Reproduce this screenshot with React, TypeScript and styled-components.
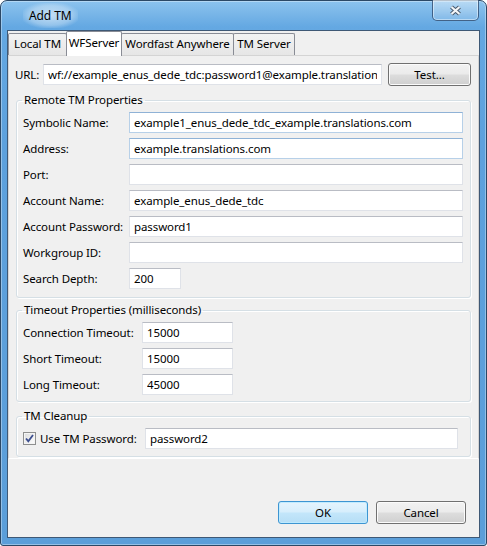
import styled, { createGlobalStyle } from "styled-components";

const GlobalStyle = createGlobalStyle`
  html, body {
    margin: 0;
    padding: 0;
  }
  body {
    background: #ffffff;
    font-family: "Noto Sans", "Liberation Sans", sans-serif;
    font-size: 11.5px;
    letter-spacing: -0.1px;
    color: #000;
  }
  * {
    box-sizing: border-box;
  }
`;

const remoteRows = [
  { label: "Symbolic Name:", value: "example1_enus_dede_tdc_example.translations.com", hot: true },
  { label: "Address:", value: "example.translations.com", hot: true },
  { label: "Port:", value: "" },
  { label: "Account Name:", value: "example_enus_dede_tdc" },
  { label: "Account Password:", value: "password1" },
  { label: "Workgroup ID:", value: "" },
  { label: "Search Depth:", value: "200", width: 52 },
];

const timeoutRows = [
  { label: "Connection Timeout:", value: "15000" },
  { label: "Short Timeout:", value: "15000" },
  { label: "Long Timeout:", value: "45000" },
];

const tabs = [
  { name: "Local TM", width: 59 },
  { name: "WFServer", width: 56, active: true },
  { name: "Wordfast Anywhere", width: 113 },
  { name: "TM Server", width: 62 },
];

const App = () => {
  return (
    <>
      <GlobalStyle />
      <Window>
        <TitleBar>
          <Title>Add TM</Title>
          <CloseButton>
            <svg width="13" height="11" viewBox="0 0 13 11">
              <path d="M2.5 2 L10.5 9 M10.5 2 L2.5 9" stroke="#4a5a6e" strokeWidth="4.2" />
              <path d="M2.5 2 L10.5 9 M10.5 2 L2.5 9" stroke="#f4f6f8" strokeWidth="2.2" />
            </svg>
          </CloseButton>
        </TitleBar>
        <Client>
          <TabStrip>
            {tabs.map((t) => (
              <Tab key={t.name} $w={t.width} $active={t.active}>
                {t.name}
              </Tab>
            ))}
          </TabStrip>
          <Page>
            <UrlRow>
              <UrlLabel>URL:</UrlLabel>
              <Field readOnly value="wf://example_enus_dede_tdc:password1@example.translations.com" />
              <Button $w={83}>Test...</Button>
            </UrlRow>

            <Group $top={6} $bottom={8}>
              <Caption>Remote TM Properties</Caption>
              <Rows>
                {remoteRows.map((r) => (
                  <FormRow key={r.label}>
                    <Label $w={106}>{r.label}</Label>
                    <Field readOnly value={r.value} $w={r.width} $hot={r.hot} />
                  </FormRow>
                ))}
              </Rows>
            </Group>

            <Group $top={4} $bottom={6}>
              <Caption>Timeout Properties (milliseconds)</Caption>
              <Rows>
                {timeoutRows.map((r) => (
                  <FormRow key={r.label}>
                    <Label $w={119}>{r.label}</Label>
                    <Field readOnly value={r.value} $w={91} />
                  </FormRow>
                ))}
              </Rows>
            </Group>

            <Group $top={6} $bottom={7}>
              <Caption>TM Cleanup</Caption>
              <FormRow>
                <CheckLabel>
                  <CheckBox>
                    <svg width="11" height="11" viewBox="0 0 11 11">
                      <path d="M2 5.5 L4.3 8.2 L9 2" fill="none" stroke="#3d4f8f" strokeWidth="1.8" />
                    </svg>
                  </CheckBox>
                  Use TM Password:
                </CheckLabel>
                <Field readOnly value="password2" $w={313} />
              </FormRow>
            </Group>
          </Page>
          <Footer>
            <Button $w={90} $default>
              OK
            </Button>
            <Button $w={90}>Cancel</Button>
          </Footer>
        </Client>
      </Window>
    </>
  );
};

export default App;

const Window = styled.div`
  width: 487px;
  height: 546px;
  border: 1px solid #2b4866;
  border-radius: 7px 7px 3px 3px;
  background: linear-gradient(180deg, #8cc3ee 0px, #64a8e2 26px, #5da1dd 140px, #5b9ed9 100%);
  box-shadow: inset 0 0 0 1px rgba(255, 255, 255, 0.35);
  display: flex;
  flex-direction: column;
  padding: 0 6px 7px;
`;

const TitleBar = styled.div`
  height: 29px;
  display: flex;
  align-items: flex-start;
`;

const Title = styled.div`
  margin: 2px 0 0 16px;
  padding: 0 6px;
  line-height: 25px;
  font-size: 12px;
  color: #000;
  background: radial-gradient(
    ellipse at center,
    rgba(255, 255, 255, 0.55) 0%,
    rgba(255, 255, 255, 0.3) 55%,
    rgba(255, 255, 255, 0) 78%
  );
`;

const CloseButton = styled.div`
  margin: -1px 1px 0 auto;
  width: 47px;
  height: 21px;
  border: 1px solid rgba(32, 62, 100, 0.75);
  border-top: none;
  border-radius: 0 0 5px 5px;
  background: linear-gradient(180deg, rgba(255, 255, 255, 0.4), rgba(255, 255, 255, 0.12));
  box-shadow: inset 0 0 0 1px rgba(255, 255, 255, 0.45);
  display: flex;
  align-items: center;
  justify-content: center;
  padding-top: 1px;
`;

const Client = styled.div`
  flex: 1;
  border: 1px solid #3e5875;
  background: #f0f0f0;
  display: flex;
  flex-direction: column;
`;

const TabStrip = styled.div`
  height: 24px;
  display: flex;
  align-items: flex-end;
  position: relative;
  z-index: 1;
`;

const Tab = styled.div<{ $w: number; $active?: boolean }>`
  width: ${(p) => p.$w}px;
  height: ${(p) => (p.$active ? 25 : 22)}px;
  margin-bottom: ${(p) => (p.$active ? -1 : 0)}px;
  margin-left: -1px;
  border: 1px solid #898c95;
  border-bottom: none;
  border-radius: 2px 2px 0 0;
  background: ${(p) => (p.$active ? "#ffffff" : "linear-gradient(180deg, #f3f3f3, #e6e6e6)")};
  position: relative;
  z-index: ${(p) => (p.$active ? 2 : 1)};
  text-align: center;
  line-height: ${(p) => (p.$active ? 22 : 20)}px;
  white-space: nowrap;

  &:first-child {
    margin-left: 0;
  }
`;

const Page = styled.div`
  border: 1px solid #d4d4d4;
  border-bottom-color: #ffffff;
  background: #f0f0f0;
  padding: 7px 7px 1px;
  display: flex;
  flex-direction: column;
`;

const UrlRow = styled.div`
  height: 23px;
  display: flex;
  align-items: center;
`;

const UrlLabel = styled.div`
  width: 28px;
  margin-left: -1px;
  flex-shrink: 0;
`;

const Field = styled.input<{ $w?: number; $hot?: boolean }>`
  ${(p) => (p.$w ? `width: ${p.$w}px; flex: none;` : "flex: 1; min-width: 0;")}
  height: 21px;
  margin: 0;
  padding: 0 4px;
  border: 1px solid ${(p) => (p.$hot ? "#b7d0e8" : "#dfe2e8")};
  border-top-color: ${(p) => (p.$hot ? "#8fb2d6" : "#b9bcc4")};
  background: #ffffff;
  font: inherit;
  letter-spacing: inherit;
  color: #000;
  outline: none;

  & + button {
    margin-left: 6px;
  }
`;

const Button = styled.button<{ $w: number; $default?: boolean }>`
  width: ${(p) => p.$w}px;
  height: 23px;
  flex: none;
  padding: 0;
  border: 1px solid ${(p) => (p.$default ? "#3d95d2" : "#707070")};
  border-radius: 3px;
  font: inherit;
  letter-spacing: inherit;
  color: #000;
  background: ${(p) =>
    p.$default
      ? "linear-gradient(180deg, #e5f4fd 0%, #d6eefc 48%, #c3e6fa 52%, #b6def6 100%)"
      : "linear-gradient(180deg, #f2f2f2 0%, #ebebeb 48%, #dddddd 52%, #cfcfcf 100%)"};
  box-shadow: inset 0 0 0 1px ${(p) => (p.$default ? "rgba(190, 235, 255, 0.9)" : "#fbfbfb")};
`;

const Group = styled.fieldset<{ $top: number; $bottom: number }>`
  margin: ${(p) => p.$top}px 0 0;
  min-width: 0;
  border: 1px solid #d5dfe5;
  border-radius: 3px;
  box-shadow: inset 1px 1px 0 #ffffff, 1px 1px 0 #ffffff;
  padding: 4px 7px ${(p) => p.$bottom}px 6px;
`;

const Caption = styled.legend`
  margin-left: -1px;
  padding: 0 2px;
  line-height: 16px;
`;

const Rows = styled.div`
  display: flex;
  flex-direction: column;
  gap: 5px;
`;

const FormRow = styled.div`
  height: 21px;
  display: flex;
  align-items: center;
`;

const Label = styled.div<{ $w: number }>`
  width: ${(p) => p.$w}px;
  flex: none;
  white-space: nowrap;
`;

const CheckLabel = styled.div`
  width: 122px;
  flex: none;
  display: flex;
  align-items: center;
  gap: 4px;
  white-space: nowrap;
`;

const CheckBox = styled.span`
  width: 13px;
  height: 13px;
  flex: none;
  border: 1px solid #8e8f8f;
  background: linear-gradient(135deg, #dadbdc, #ffffff);
  box-shadow: inset 0 0 0 1px #f4f4f4;
  display: flex;
  align-items: center;
  justify-content: center;
`;

const Footer = styled.div`
  margin-top: auto;
  display: flex;
  justify-content: flex-end;
  gap: 8px;
  padding: 0 13px 13px 0;
`;
